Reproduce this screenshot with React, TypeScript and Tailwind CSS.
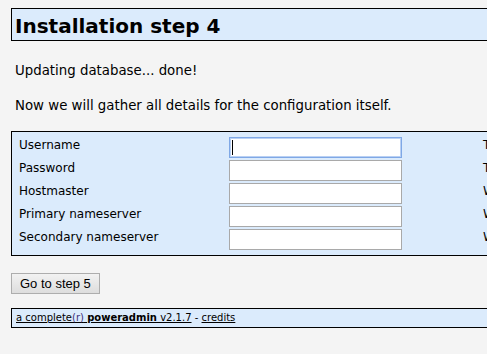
import React from "react";

const rows = [
  { label: "Username", hint: "The username for Poweradmin. This new user will have limited rights only.", focus: true },
  { label: "Password", hint: "The password for this username.", focus: false },
  { label: "Hostmaster", hint: "When creating SOA records and no hostmaster is provided, this value here will be used.", focus: false },
  { label: "Primary nameserver", hint: "When creating new zones using the template, this value will be used as primary nameserver.", focus: false },
  { label: "Secondary nameserver", hint: "When creating new zones using the template, this value will be used as secondary nameserver.", focus: false },
];

export default function App() {
  return (
    <div
      className="w-full h-[354px] overflow-hidden bg-[#f4f4f4] text-black text-[13.33px]"
      style={{ fontFamily: '"DejaVu Sans", Verdana, sans-serif' }}
    >
      <div className="w-[1000px] pl-[11px] pt-[8px]">
        <div className="h-[33px] border border-black bg-[#dbebfc] pl-[3px] pt-[6px]">
          <h1 className="text-[20px] font-bold leading-[23px]">Installation step 4</h1>
        </div>

        <p className="mt-[22px] pl-[4px] leading-[16px]">Updating database... done!</p>
        <p className="mt-[19px] pl-[4px] leading-[16px]">
          Now we will gather all details for the configuration itself.
        </p>

        <div className="mt-[17px] border border-black bg-[#dbebfc] pt-[5px] pb-[5px] flex flex-col gap-[2px]">
          {rows.map((r) => (
            <div key={r.label} className="flex items-start h-[21px]">
              <div className="w-[217px] pl-[7px] pt-[1px] text-[12px] leading-[14px]">{r.label}</div>
              <div className="relative w-[173px] h-[21px]">
                <input
                  type="text"
                  className={
                    r.focus
                      ? "block w-full h-full bg-white border border-[#7fa8e6] shadow-[inset_0_0_0_1px_#b9d0f3] outline-none"
                      : "block w-full h-full bg-white border border-[#a9a9a9] outline-none"
                  }
                />
                {r.focus && (
                  <span className="absolute left-[3px] top-[3px] w-[1px] h-[15px] bg-black" />
                )}
              </div>
              <div className="ml-[81px] w-[420px] pt-[1px] text-[12px] leading-[14px] whitespace-nowrap">
                {r.hint}
              </div>
            </div>
          ))}
        </div>

        <button
          type="button"
          className="mt-[17px] h-[21px] px-[8px] border border-[#adadad] bg-gradient-to-b from-[#f2f2f2] to-[#dddddd] text-[13px] leading-[15px] text-black"
          style={{ fontFamily: '"Liberation Sans", Arial, sans-serif' }}
        >
          Go to step 5
        </button>

        <div className="mt-[14px] h-[20px] border border-black bg-[#dbebfc] pl-[4px] text-[10px] leading-[18px]">
          <a href="#" className="underline text-black">
            a complete<span className="text-[#3b2f7a]">(r)</span> <strong>poweradmin</strong> v2.1.7
          </a>{" "}
          -{" "}
          <a href="#" className="underline text-black">
            credits
          </a>
        </div>
      </div>
    </div>
  );
}
